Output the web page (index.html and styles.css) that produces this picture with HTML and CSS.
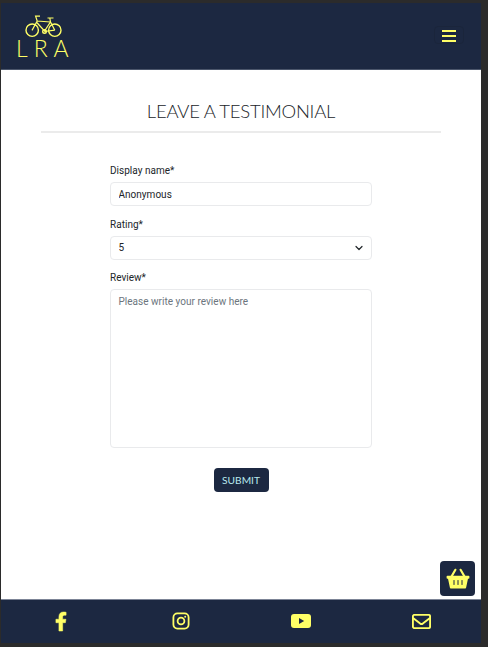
FILE: index.html
```
<!DOCTYPE html>
<html lang="en">
<head>
<meta charset="utf-8">
<title>Leave a Testimonial</title>
<link rel="stylesheet" href="styles.css">
</head>
<body>
<div class="page">
  <header class="header">
    <a class="brand">
      <svg class="bike" viewBox="0 0 37 23" fill="none" stroke="currentColor" stroke-width="1.4">
        <circle cx="7.2" cy="15.2" r="6.2"/><circle cx="29.8" cy="15.2" r="6.2"/>
        <circle cx="19.5" cy="16.5" r="1.8"/>
        <path d="M7 15.4L12.2 6 10.6 1.2H15M12.2 6L25.5 7M11.8 7.5L19.5 16 25.5 7 29.8 15.2M25.5 7L24.8 3M22.5 3H28.5M19.5 16.5L29.8 15.2" stroke-width="1.2"/>
      </svg>
      <span class="brand-name">LRA</span>
    </a>
    <button class="menu" aria-label="Menu"><span></span><span></span><span></span></button>
  </header>
  <main class="main">
    <h1 class="title">LEAVE A TESTIMONIAL</h1>
    <form class="form">
      <label class="label" for="name">Display name*</label>
      <input class="field" id="name" value="Anonymous">
      <label class="label" for="rating">Rating*</label>
      <div class="select-wrap">
        <select class="field" id="rating"><option>5</option></select>
        <svg class="chevron" viewBox="0 0 16 16" fill="none" stroke="currentColor" stroke-width="2.4" stroke-linecap="round" stroke-linejoin="round"><path d="M2 5l6 6 6-6"/></svg>
      </div>
      <label class="label" for="review">Review*</label>
      <textarea class="field review" id="review" placeholder="Please write your review here"></textarea>
      <button class="submit" type="button">SUBMIT</button>
    </form>
  </main>
  <a class="basket">
    <svg viewBox="0 0 24 22" fill="none" stroke="currentColor" stroke-linecap="round" stroke-linejoin="round">
      <path d="M5.5 8.5L9.4 1.8M18.5 8.5L14.6 1.8" stroke-width="2.2"/>
      <path d="M1.4 8.5H22.6V10H21.3L19.3 19.6H4.7L2.7 10H1.4Z" fill="currentColor" stroke-width="1.6"/>
      <path class="slots" d="M8 12.5V16.5M12 12.5V16.5M16 12.5V16.5" stroke-width="1"/>
    </svg>
  </a>
  <footer class="footer">
    <a><svg class="fb" viewBox="0 0 320 512" fill="currentColor" stroke="currentColor" stroke-width="14"><path d="M279.14 288l14.22-92.66h-88.91v-60.13c0-25.35 12.42-50.06 52.24-50.06h40.42V6.26S260.43 0 225.36 0c-73.22 0-121.08 44.38-121.08 124.72v70.62H22.89V288h81.39v224h100.17V288z"/></svg></a>
    <a><svg class="ig" viewBox="0 0 18 18" fill="none" stroke="currentColor" stroke-width="1.8"><rect x="1.4" y="1.4" width="15.2" height="15.2" rx="4"/><circle cx="9" cy="9" r="3.4"/><circle cx="13.2" cy="4.8" r="1" fill="currentColor" stroke="none"/></svg></a>
    <a><svg class="yt" viewBox="0 0 20 14"><rect width="20" height="14" rx="3" fill="currentColor"/><path class="play" d="M8 4L13.2 7 8 10Z"/></svg></a>
    <a><svg class="mail" viewBox="0 0 19 15" fill="none" stroke="currentColor" stroke-width="1.9" stroke-linejoin="round"><rect x=".9" y=".9" width="17.2" height="13.2" rx="1.5"/><path d="M1 4L8.2 9.6Q9.5 10.5 10.8 9.6L18 4"/></svg></a>
  </footer>
</div>
</body>
</html>
```
FILE: styles.css
```
* { box-sizing: border-box; }

body {
  margin: 0;
  height: 647px;
  padding: 3px 7px 4px 1px;
  background: #2b2b2b;
  font-family: Roboto, sans-serif;
  color: #212529;
  overflow: hidden;
}

.page {
  position: relative;
  display: flex;
  flex-direction: column;
  height: 640px;
  background: #fff;
}

.header {
  display: flex;
  justify-content: space-between;
  align-items: flex-start;
  height: 67px;
  padding: 12px 17px 0 17px;
  background: #1c2841;
  border-bottom: 1px solid #4b566b;
  color: #ffff66;
}

.brand {
  display: flex;
  flex-direction: column;
  width: 56px;
}

.bike {
  width: 37px;
  height: 23px;
  margin-left: 7px;
}

.brand-name {
  font: 300 23px/24px Lato, sans-serif;
  letter-spacing: 6px;
  margin-top: -2px;
  margin-left: -2px;
}

.menu {
  display: flex;
  flex-direction: column;
  gap: 3px;
  width: 30px;
  height: 18px;
  margin-top: 11px;
  padding: 3px 7px;
  border: 1px solid #1a253b;
  border-radius: 4px;
  background: none;
}

.menu span {
  flex: none;
  height: 2px;
  background: #ffff66;
}

.main { flex: 1; padding: 0 40px; }

.title {
  height: 63px;
  margin: 0;
  padding-top: 29px;
  border-bottom: 2px solid #ebebeb;
  font: 300 18.5px/24px Lato, sans-serif;
  letter-spacing: -0.25px;
  text-align: center;
}

.form {
  display: flex;
  flex-direction: column;
  width: 262px;
  margin: 30px auto 0;
}

.label {
  height: 19px;
  font-size: 10px;
  line-height: 16px;
  letter-spacing: 0.02px;
}

.field {
  display: block;
  width: 100%;
  height: 24px;
  margin: 0 0 10.5px;
  padding: 0 7.5px;
  border: 1px solid #e9eaec;
  border-radius: 4px;
  background: #fff;
  color: #212529;
  font: 10px/15px Roboto, sans-serif;
  letter-spacing: 0.02px;
  appearance: none;
}

.select-wrap { position: relative; }

.chevron {
  position: absolute;
  top: 8px;
  right: 9px;
  width: 8px;
  height: 8px;
}

.review {
  height: 159px;
  margin: 0;
  padding-top: 4px;
  resize: none;
}

.review::placeholder { color: #6c757d; }

.submit {
  align-self: center;
  width: 55px;
  height: 24px;
  margin-top: 20px;
  padding: 0;
  border: 0;
  border-radius: 4px;
  background: #1c2841;
  color: #b8e8ee;
  font: 10.2px/24px Lato, sans-serif;
}

.basket {
  position: absolute;
  right: 6px;
  bottom: 47px;
  display: flex;
  justify-content: center;
  align-items: center;
  width: 35px;
  height: 35px;
  border-radius: 4px;
  background: #1c2841;
  color: #ffff66;
}

.basket svg { width: 24px; height: 22px; }
.slots { stroke: #1c2841; }

.footer {
  display: grid;
  grid-template-columns: repeat(4, 1fr);
  height: 44px;
  padding-bottom: 1px;
  border-top: 1px solid #7c8496;
  background: #1c2841;
  color: #ffff66;
}

.footer a { display: flex; justify-content: center; align-items: center; }
.fb { width: 12px; height: 19px; overflow: visible; }
.ig { width: 18px; height: 18px; }
.yt { width: 20px; height: 14px; }
.mail { width: 19px; height: 15px; }
.play { fill: #1c2841; }
```
